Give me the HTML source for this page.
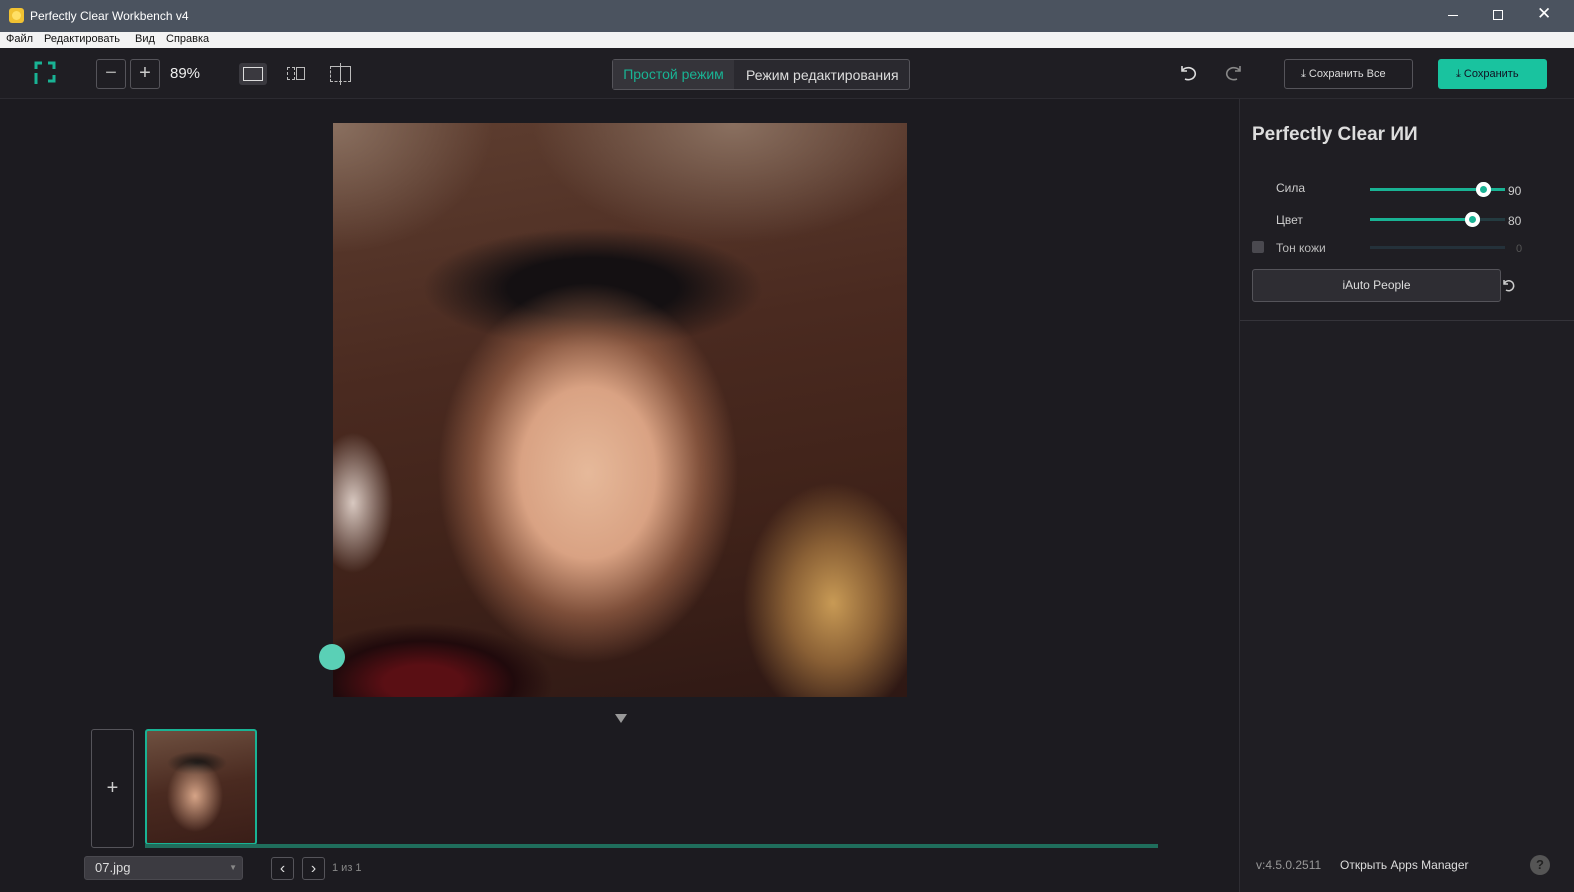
<!DOCTYPE html>
<html><head><meta charset="utf-8"><style>
*{margin:0;padding:0;box-sizing:border-box}
body{width:1574px;height:892px;background:#1c1b20;font-family:"Liberation Sans",sans-serif;position:relative;overflow:hidden;color:#ddd}
.abs{position:absolute}
.title{left:0;top:0;width:1574px;height:32px;background:#4b535f;color:#fff;font-size:12px}
.menu{left:0;top:32px;width:1574px;height:16px;background:#f3f3f3;color:#111;font-size:11px}
.tb{left:0;top:48px;width:1574px;height:51px;background:#1f1e23;border-bottom:1px solid #2c2b31}
.btn{border:1px solid #55545a;border-radius:3px}
.side{left:1239px;top:99px;width:335px;height:793px;background:#1f1e23;border-left:1px solid #2e2d33}
</style></head><body>
<div class="abs title">
 <div class="abs" style="left:9px;top:8px;width:15px;height:15px;background:#f1c232;border-radius:3px"><div style="margin:3px;width:9px;height:9px;border-radius:50%;background:#ffe066"></div></div>
 <div class="abs" style="left:30px;top:9px">Perfectly Clear Workbench v4</div>
 <div class="abs" style="left:1448px;top:15px;width:10px;height:1px;background:#fff"></div>
 <div class="abs" style="left:1493px;top:10px;width:10px;height:10px;border:1px solid #fff"></div>
 <div class="abs" style="left:1537px;top:4px;font-size:17px">✕</div>
</div>
<div class="abs menu"><span class="abs" style="left:6px;top:1px">Файл</span><span class="abs" style="left:44px;top:1px">Редактировать</span><span class="abs" style="left:135px;top:1px">Вид</span><span class="abs" style="left:166px;top:1px">Справка</span></div>
<div class="abs tb">
 <svg class="abs" style="left:34px;top:13px" width="22" height="24" viewBox="0 0 22 24" fill="none" stroke="#19b394" stroke-width="3"><path d="M2 8V2h6M14 2h6v6M20 14v6h-6M2 12v11"/></svg>
 <div class="abs btn" style="left:96px;top:11px;width:30px;height:30px;color:#aaa;text-align:center;font-size:20px;line-height:27px">−</div>
 <div class="abs btn" style="left:130px;top:11px;width:30px;height:30px;color:#ccc;text-align:center;font-size:20px;line-height:27px">+</div>
 <div class="abs" style="left:170px;top:17px;font-size:15px;color:#eee">89%</div>
 <div class="abs" style="left:239px;top:15px;width:28px;height:22px;background:#3a393f;border-radius:3px"><div style="margin:4px 4px;width:20px;height:14px;border:1.5px solid #ddd"></div></div>
 <div class="abs" style="left:287px;top:19px;width:8px;height:13px;border:1px dashed #bbb"></div><div class="abs" style="left:296px;top:19px;width:9px;height:13px;border:1px solid #bbb"></div>
 <div class="abs" style="left:330px;top:18px;width:21px;height:16px;border:1px dashed #bbb;border-right-style:solid;border-top-style:solid"></div><div class="abs" style="left:340px;top:15px;width:1px;height:22px;background:#bbb"></div>
 <div class="abs btn" style="left:612px;top:11px;width:298px;height:31px;background:#2a292f"></div>
 <div class="abs" style="left:613px;top:12px;width:121px;height:29px;background:#35343a;color:#19b394;font-size:14px;text-align:center;line-height:29px">Простой режим</div>
 <div class="abs" style="left:746px;top:19px;color:#ddd;font-size:14px">Режим редактирования</div>
 <svg class="abs" style="left:1178px;top:14px" width="20" height="20" fill="none" stroke="#ddd" stroke-width="1.6"><path d="M4 4v5h5M4 9a7 6 0 1 1 3 8"/></svg>
 <svg class="abs" style="left:1224px;top:14px" width="20" height="20" fill="none" stroke="#888" stroke-width="1.6"><path d="M16 4v5h-5M16 9a7 6 0 1 0 -3 8"/></svg>
 <div class="abs btn" style="left:1284px;top:11px;width:129px;height:30px;color:#ddd;font-size:11px;line-height:28px;padding-left:16px">⤓ Сохранить Все</div>
 <div class="abs" style="left:1438px;top:11px;width:109px;height:30px;background:#19c39f;border-radius:3px;color:#112;font-size:11px;line-height:30px;padding-left:18px">⤓ Сохранить</div>
</div>
<div class="abs" style="left:333px;top:123px;width:574px;height:574px;background:
radial-gradient(ellipse 150px 190px at 255px 350px,#e6b99a 0%,#d9a283 45%,rgba(170,110,80,0.6) 75%,rgba(120,70,50,0) 100%),
radial-gradient(ellipse 170px 60px at 260px 165px,#141012 50%,rgba(20,15,15,0) 100%),
radial-gradient(ellipse 130px 60px at 90px 560px,#5a0f14 30%,#200a0c 70%,rgba(0,0,0,0) 100%),
radial-gradient(ellipse 90px 120px at 500px 480px,#c89a55 0%,#8a6035 50%,rgba(0,0,0,0) 100%),
radial-gradient(ellipse 40px 70px at 20px 380px,#d8c8c0 0%,rgba(0,0,0,0) 100%),
radial-gradient(ellipse 200px 120px at 400px 0px,#8a7060 0%,rgba(0,0,0,0) 100%),
radial-gradient(ellipse 160px 130px at 0px 0px,#8a7060 0%,rgba(0,0,0,0) 100%),
linear-gradient(170deg,#5e3e30 0%,#4a2a20 40%,#3f2219 70%,#2e1814 100%)"></div>
<div class="abs" style="left:319px;top:644px;width:26px;height:26px;border-radius:50%;background:#5ad0b6"></div>
<div class="abs" style="left:615px;top:714px;width:0;height:0;border-left:6px solid transparent;border-right:6px solid transparent;border-top:9px solid #999"></div>
<div class="abs btn" style="left:91px;top:729px;width:43px;height:119px;color:#ccc;text-align:center;line-height:117px;font-size:20px">+</div>
<div class="abs" style="left:145px;top:729px;width:112px;height:116px;border:2px solid #19b394;border-radius:3px;background:radial-gradient(ellipse 28px 36px at 48px 65px,#d6a487,rgba(0,0,0,0)),radial-gradient(ellipse 30px 12px at 50px 32px,#111,rgba(0,0,0,0)),linear-gradient(170deg,#6e5040,#4a2a20,#3a1e18)"></div>
<div class="abs" style="left:145px;top:844px;width:1013px;height:4px;background:#1f6e5c"></div>
<div class="abs" style="left:84px;top:856px;width:159px;height:24px;background:#3c3b41;border:1px solid #4a494f;border-radius:3px;color:#ddd;font-size:13px;line-height:22px;padding-left:10px">07.jpg<span style="position:absolute;right:5px;font-size:8px;color:#888">▼</span></div>
<div class="abs btn" style="left:271px;top:857px;width:23px;height:23px;color:#ddd;text-align:center;line-height:21px">‹</div>
<div class="abs btn" style="left:302px;top:857px;width:23px;height:23px;color:#ddd;text-align:center;line-height:21px">›</div>
<div class="abs" style="left:332px;top:862px;font-size:11px;color:#888">1 из 1</div>
<div class="abs side">
 <div class="abs" style="left:12px;top:25px;font-size:19px;font-weight:bold;color:#ddd">Perfectly Clear ИИ</div>
 <div class="abs" style="left:36px;top:82px;font-size:12px;color:#ccc">Сила</div>
 <div class="abs" style="left:130px;top:89px;width:135px;height:3px;background:#19b394"></div><div class="abs" style="left:236px;top:83px;width:15px;height:15px;border-radius:50%;background:#fff;box-shadow:inset 0 0 0 4px #fff,inset 0 0 0 8px #19b394"></div>
 <div class="abs" style="left:268px;top:85px;font-size:12px;color:#ccc">90</div>
 <div class="abs" style="left:36px;top:114px;font-size:12px;color:#ccc">Цвет</div>
 <div class="abs" style="left:130px;top:119px;width:135px;height:3px;background:#243b40"></div><div class="abs" style="left:130px;top:119px;width:104px;height:3px;background:#19b394"></div><div class="abs" style="left:225px;top:113px;width:15px;height:15px;border-radius:50%;background:#fff;box-shadow:inset 0 0 0 4px #fff,inset 0 0 0 8px #19b394"></div>
 <div class="abs" style="left:268px;top:115px;font-size:12px;color:#ccc">80</div>
 <div class="abs" style="left:12px;top:142px;width:12px;height:12px;background:#4a494f;border-radius:2px"></div>
 <div class="abs" style="left:36px;top:142px;font-size:12px;color:#bbb">Тон кожи</div>
 <div class="abs" style="left:130px;top:147px;width:135px;height:3px;background:#24313a"></div>
 <div class="abs" style="left:276px;top:144px;font-size:11px;color:#555">0</div>
 <div class="abs btn" style="left:12px;top:170px;width:249px;height:33px;background:#2e2d33;color:#ddd;font-size:12px;text-align:center;line-height:31px">iAuto People</div>
 <svg class="abs" style="left:262px;top:179px" width="14" height="14" fill="none" stroke="#ccc" stroke-width="1.5"><path d="M2 2v4h4M2 6a5 5 0 1 1 2 6"/></svg>
 <div class="abs" style="left:0;top:221px;width:335px;height:1px;background:#35343a"></div>
 <div class="abs" style="left:16px;top:759px;font-size:12px;color:#999">v:4.5.0.2511</div>
 <div class="abs" style="left:100px;top:759px;font-size:12px;color:#ddd">Открыть Apps Manager</div>
 <div class="abs" style="left:290px;top:756px;width:20px;height:20px;border-radius:50%;background:#555;color:#222;font-weight:bold;font-size:13px;text-align:center;line-height:20px">?</div>
</div>
</body></html>
